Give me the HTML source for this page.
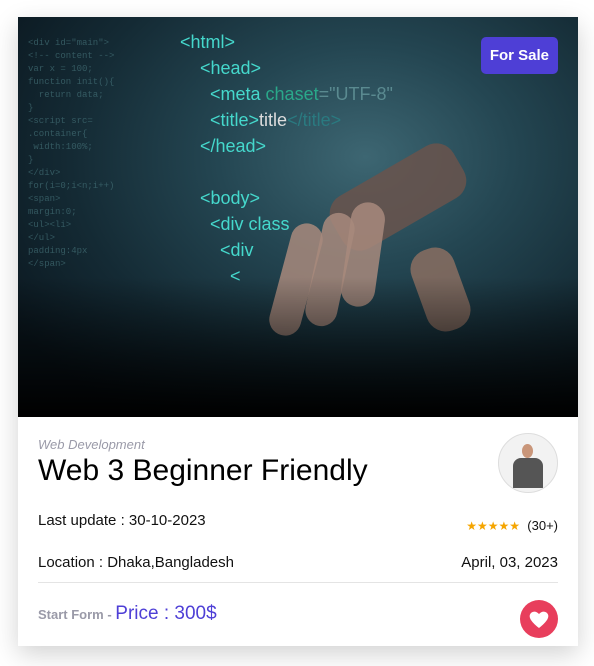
<!DOCTYPE html>
<html><head><style>
body{margin:0;background:#fff;width:594px;height:666px;overflow:hidden;font-family:"Liberation Sans",sans-serif}
.card{position:absolute;left:18px;top:17px;width:560px;height:629px;background:#fff;box-shadow:0 8px 24px rgba(0,0,0,.18)}
.img{position:absolute;left:0;top:0;width:560px;height:400px;overflow:hidden;
background:radial-gradient(ellipse at 62% 35%,#3d6672 0%,#244652 30%,#142a34 60%,#0b1820 85%),#0b1820}
.img:after{content:"";position:absolute;left:0;right:0;bottom:0;height:140px;background:linear-gradient(rgba(0,0,0,0),#000)}
.code{position:absolute;font-family:"Liberation Sans",sans-serif;font-size:18px;line-height:26px;color:#45d8cc}
.faint{position:absolute;font-family:"Liberation Mono",monospace;font-size:9px;line-height:13px;color:#4a7a80;opacity:.6}
.badge{position:absolute;right:20px;top:20px;background:#4e3fd6;color:#fff;font-weight:bold;font-size:15px;padding:10px 9px;border-radius:5px}
.hand{position:absolute;background:#a88a7c;border-radius:20px;opacity:.85}
</style></head><body>
<div class="card">
<div class="img">
<div class="faint" style="left:10px;top:20px">&lt;div id="main"&gt;<br>&lt;!-- content --&gt;<br>var x = 100;<br>function init(){<br>&nbsp; return data;<br>}<br>&lt;script src=<br>.container{<br>&nbsp;width:100%;<br>}<br>&lt;/div&gt;<br>for(i=0;i&lt;n;i++)<br>&lt;span&gt;<br>margin:0;<br>&lt;ul&gt;&lt;li&gt;<br>&lt;/ul&gt;<br>padding:4px<br>&lt;/span&gt;</div>
<div class="code" style="left:162px;top:12px">&lt;html&gt;<br>&nbsp;&nbsp;&nbsp;&nbsp;&lt;head&gt;<br>&nbsp;&nbsp;&nbsp;&nbsp;&nbsp;&nbsp;&lt;meta <span style="color:#2aa88a">chaset</span><span style="color:#5a8a90">="UTF-8"</span><br>&nbsp;&nbsp;&nbsp;&nbsp;&nbsp;&nbsp;&lt;title&gt;<span style="color:#ddd">title</span><span style="color:#2a7a80">&lt;/title&gt;</span><br>&nbsp;&nbsp;&nbsp;&nbsp;&lt;/head&gt;<br><br>&nbsp;&nbsp;&nbsp;&nbsp;&lt;body&gt;<br>&nbsp;&nbsp;&nbsp;&nbsp;&nbsp;&nbsp;&lt;div class<br>&nbsp;&nbsp;&nbsp;&nbsp;&nbsp;&nbsp;&nbsp;&nbsp;&lt;div<br>&nbsp;&nbsp;&nbsp;&nbsp;&nbsp;&nbsp;&nbsp;&nbsp;&nbsp;&nbsp;&lt;</div>
<div class="hand" style="left:310px;top:150px;width:140px;height:60px;transform:rotate(-30deg);background:#6a544c"></div>
<div class="hand" style="left:262px;top:205px;width:32px;height:115px;transform:rotate(15deg)"></div>
<div class="hand" style="left:296px;top:195px;width:32px;height:115px;transform:rotate(12deg)"></div>
<div class="hand" style="left:328px;top:185px;width:34px;height:105px;transform:rotate(8deg)"></div>
<div class="hand" style="left:400px;top:230px;width:45px;height:85px;transform:rotate(-20deg);background:#8a6e62"></div>
<div class="badge">For Sale</div>
</div>
<div style="position:absolute;left:20px;top:420px;font-style:italic;font-size:13px;color:#9a9aa8">Web Development</div>
<div style="position:absolute;left:20px;top:437px;font-size:30px;color:#000">Web 3 Beginner Friendly</div>
<div style="position:absolute;right:20px;top:416px;width:58px;height:58px;border-radius:50%;background:#f2f2f2;border:1px solid #ddd;overflow:hidden">
 <div style="position:absolute;left:23px;top:10px;width:11px;height:14px;border-radius:50%;background:#c9967a"></div>
 <div style="position:absolute;left:14px;top:24px;width:30px;height:30px;border-radius:8px 8px 0 0;background:#555"></div>
</div>
<div style="position:absolute;left:20px;top:495px;font-size:15px;color:#111">Last update : 30-10-2023</div>
<div style="position:absolute;right:20px;top:501px;font-size:13px;color:#111"><span style="color:#f5a500;font-size:12px">★★★★★</span>&nbsp; (30+)</div>
<div style="position:absolute;left:20px;top:537px;font-size:15px;color:#111">Location : Dhaka,Bangladesh</div>
<div style="position:absolute;right:20px;top:537px;font-size:15px;color:#111">April, 03, 2023</div>
<div style="position:absolute;left:20px;right:20px;top:565px;height:1px;background:#e4e4e4"></div>
<div style="position:absolute;left:20px;top:586px;font-size:13px;color:#9a9aa8;font-weight:bold">Start Form - <span style="font-size:19px;color:#4e3fd6;font-weight:normal">Price : 300$</span></div>
<div style="position:absolute;right:20px;top:583px;width:38px;height:38px;border-radius:50%;background:#e83e5c">
<svg width="38" height="38" viewBox="0 0 38 38"><path d="M19 28 C10 21 9 17 10 14.5 C11.5 11 16 10.5 19 14 C22 10.5 26.5 11 28 14.5 C29 17 28 21 19 28Z" fill="#fff"/></svg>
</div>
</div>
</body></html>
